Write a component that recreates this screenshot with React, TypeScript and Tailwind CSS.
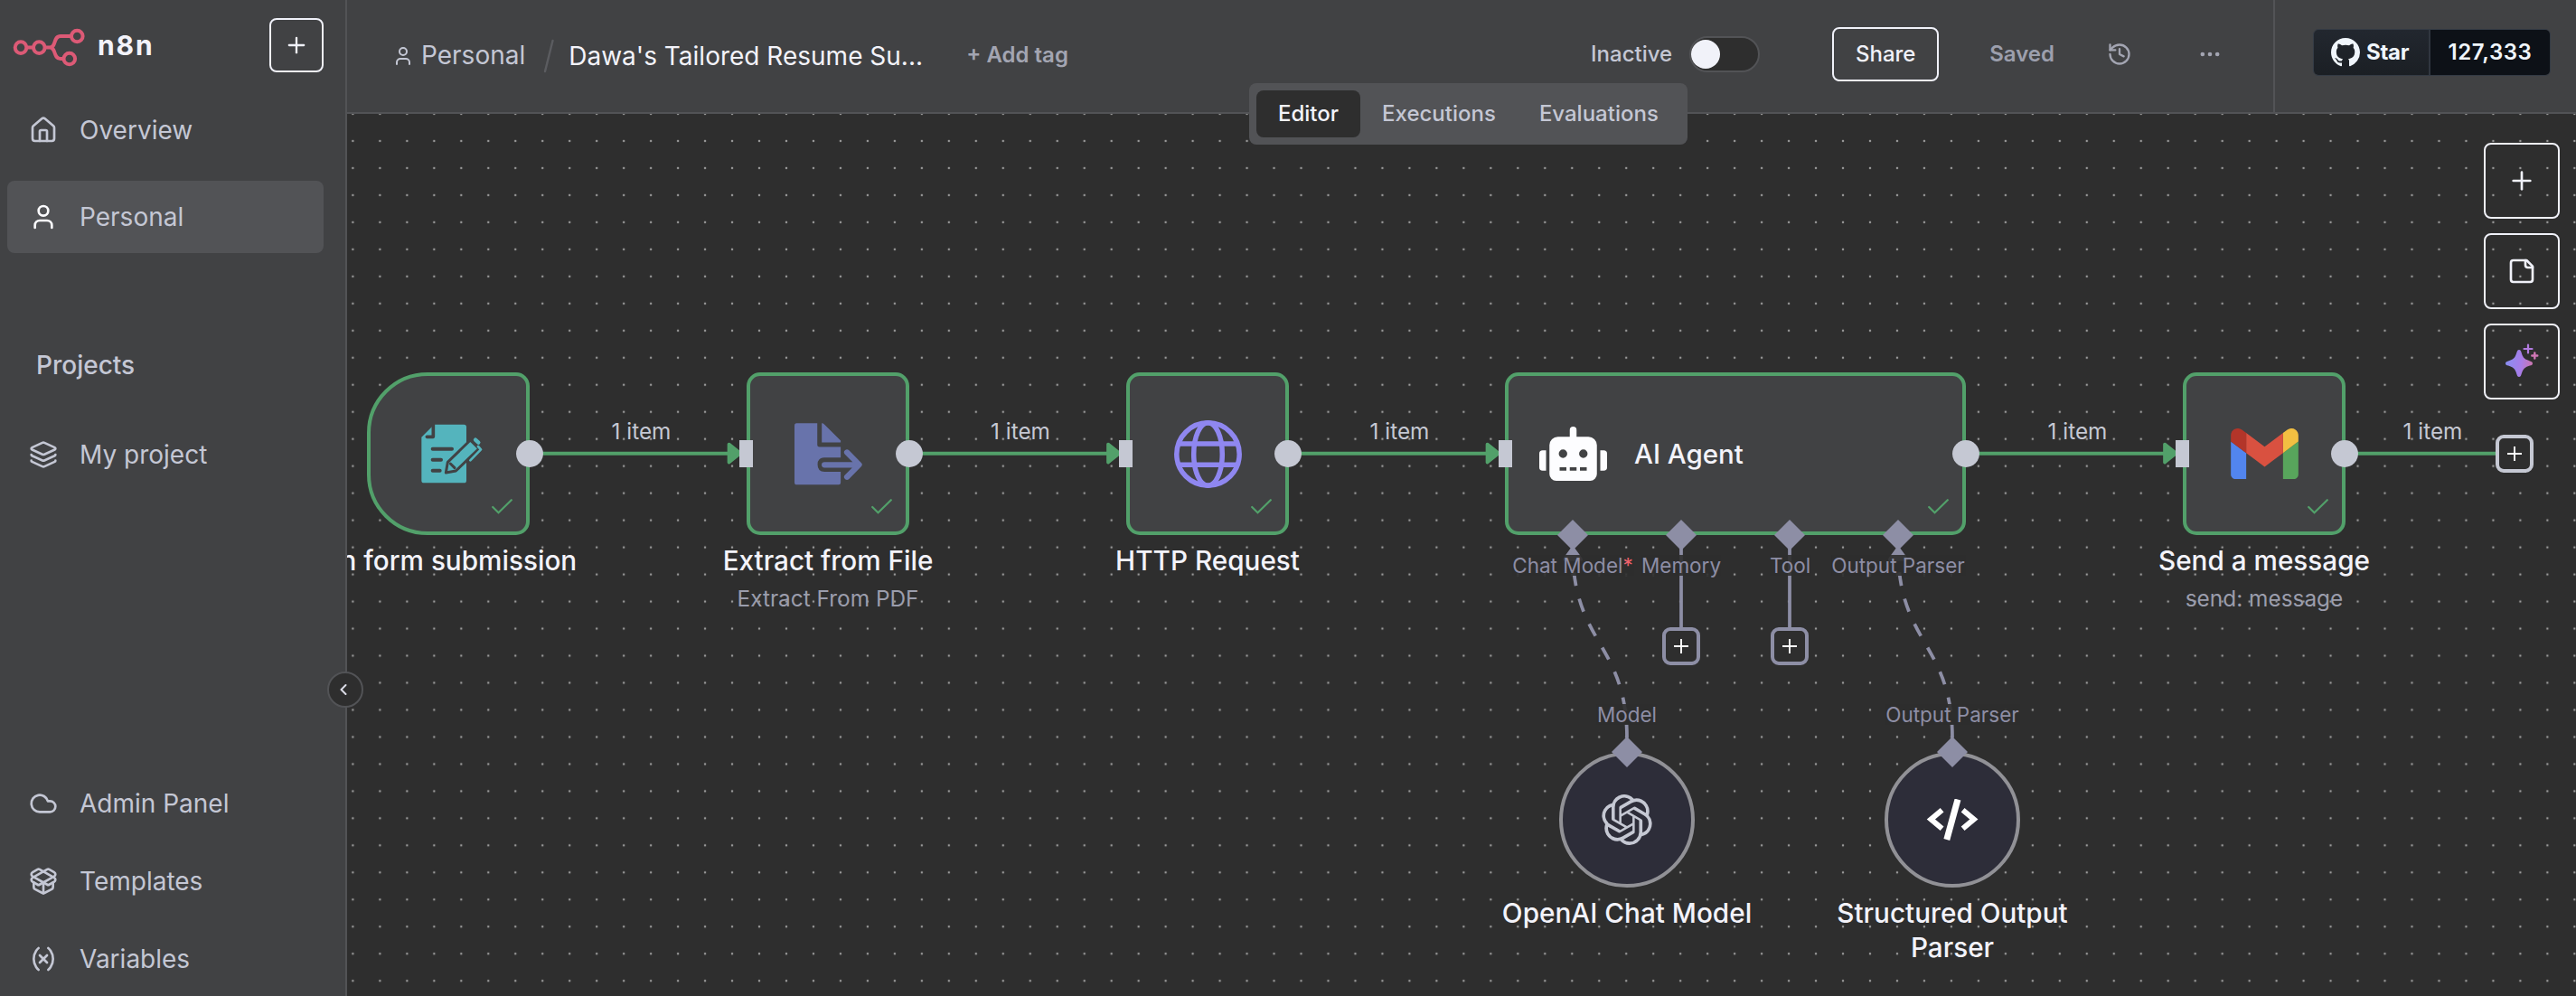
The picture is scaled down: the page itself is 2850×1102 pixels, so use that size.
import React from "react";
import type { ReactNode } from "react";
import {
  ChevronLeft,
  Cloud,
  Ellipsis,
  History,
  House,
  Layers,
  PackageOpen,
  Plus,
  User,
  Variable,
} from "lucide-react";
import { FaRobot } from "react-icons/fa";
import { SiOpenai } from "react-icons/si";

/* ---------- Sidebar ---------- */

function Logo() {
  return (
    <svg className="h-[46px] w-[84px]" viewBox="13 30 84 46" fill="none" stroke="#dc5a76" strokeWidth="4">
      <circle cx="23" cy="52.6" r="6.3" />
      <circle cx="43.3" cy="52.6" r="6.3" />
      <circle cx="85.3" cy="40" r="6.3" />
      <circle cx="76.8" cy="65" r="6.3" />
      <path d="M29 52.6H37M50 52.6H55C62.5 52.6 58.5 40 67 40H79M55 52.6C62.5 52.6 58.5 65 67 65H70.5" />
    </svg>
  );
}

function NavItem({ icon, label, active = false }: { icon: ReactNode; label: string; active?: boolean }) {
  return (
    <a
      className={
        active
          ? "flex h-20 w-[350px] items-center gap-6 rounded-lg bg-[#525356] pl-6 text-[28px] text-[#c4c7d4]"
          : "flex h-20 w-[350px] items-center gap-6 rounded-lg pl-6 text-[28px] text-[#c4c7d4]"
      }
    >
      {icon}
      <span>{label}</span>
    </a>
  );
}

function Sidebar() {
  return (
    <aside className="relative z-20 flex h-full w-[384px] shrink-0 flex-col border-r-2 border-[#525356] bg-[#414244] pl-2">
      <div className="mt-5 flex h-[60px] items-center pr-6">
        <div className="ml-[5px] mt-1.5">
          <Logo />
        </div>
        <span className="ml-[11px] text-[30px] font-bold tracking-[1.9px] text-[#f3f3fa]">n8n</span>
        <button className="ml-auto flex size-[60px] items-center justify-center rounded-lg border-2 border-[#f0f1f9] text-[#f0f1f9]">
          <Plus size={28} />
        </button>
      </div>
      <nav className="mt-6 flex flex-col gap-4">
        <NavItem icon={<House size={32} />} label="Overview" />
        <NavItem active icon={<User size={32} className="text-[#fbfbfe]" />} label="Personal" />
      </nav>
      <h2 className="ml-8 mt-[104px] text-[28px] font-medium leading-10 text-[#c4c7d4]">Projects</h2>
      <nav className="mt-[39px]">
        <NavItem icon={<Layers size={32} />} label="My project" />
      </nav>
      <nav className="mb-px mt-auto flex flex-col gap-1.5">
        <NavItem icon={<Cloud size={32} />} label="Admin Panel" />
        <NavItem icon={<PackageOpen size={32} />} label="Templates" />
        <NavItem icon={<Variable size={32} />} label="Variables" />
      </nav>
      <button className="absolute right-[-20px] top-[743px] flex size-10 items-center justify-center rounded-full border-2 border-[#525356] bg-[#2e2e2e] pr-1 text-[#dcdde8]">
        <ChevronLeft size={20} strokeWidth={2.4} />
      </button>
    </aside>
  );
}

/* ---------- Header ---------- */

function GithubMark() {
  return (
    <svg className="size-8" viewBox="0 0 16 16" fill="currentColor">
      <path d="M8 0C3.58 0 0 3.58 0 8c0 3.54 2.29 6.53 5.47 7.59.4.07.55-.17.55-.38 0-.19-.01-.82-.01-1.49-2.01.37-2.53-.49-2.69-.94-.09-.23-.48-.94-.82-1.13-.28-.15-.68-.52-.01-.53.63-.01 1.08.58 1.23.82.72 1.21 1.87.87 2.33.66.07-.52.28-.87.51-1.07-1.78-.2-3.64-.89-3.64-3.95 0-.87.31-1.59.82-2.15-.08-.2-.36-1.02.08-2.12 0 0 .67-.21 2.2.82.64-.18 1.32-.27 2-.27s1.36.09 2 .27c1.53-1.04 2.2-.82 2.2-.82.44 1.1.16 1.92.08 2.12.51.56.82 1.27.82 2.15 0 3.07-1.87 3.75-3.65 3.95.29.25.54.73.54 1.48 0 1.07-.01 1.93-.01 2.2 0 .21.15.46.55.38A8.01 8.01 0 0 0 16 8c0-4.42-3.58-8-8-8z" />
    </svg>
  );
}

function Header() {
  return (
    <header className="flex h-[126px] shrink-0 border-b-2 border-[#525356] bg-[#414244]">
      <div className="flex h-[122px] items-center text-[#c4c7d4]">
        <User size={24} className="ml-[50px] mt-0.5" />
        <span className="ml-2 text-[28px]">Personal</span>
        <svg className="ml-5 h-10 w-3" viewBox="0 0 12 40">
          <path d="M10.5 4L2 38" stroke="#5b5c60" strokeWidth="2.4" strokeLinecap="round" />
        </svg>
        <span className="ml-4 mt-0.5 w-[394px] whitespace-nowrap text-[28px] text-[#f3f3fa]">
          Dawa's Tailored Resume Su...
        </span>
        <span className="ml-[46px] text-[24px] font-semibold text-[#a3a5b2]">+ Add tag</span>
      </div>
      <div className="ml-auto flex h-[120px] items-center">
        <span className="text-[24px] font-medium text-[#c4c7d4]">Inactive</span>
        <span className="ml-[19px] flex h-10 w-[78px] items-center rounded-full border-2 border-[#525356] bg-[#2e2e2e]">
          <span className="size-8 rounded-full bg-[#f1f2f9]" />
        </span>
        <button className="ml-20 flex h-[60px] w-[118px] items-center justify-center rounded-lg border-2 border-[#f0f1f9] text-[24px] font-medium text-[#f0f1f9]">
          Share
        </button>
        <span className="ml-[56px] text-[24px] font-semibold text-[#9c9fad]">Saved</span>
        <History size={28} className="ml-[58px] text-[#a3a5b2]" />
        <Ellipsis size={28} className="ml-[72px] text-[#a3a5b2]" />
      </div>
      <div className="ml-[56px] flex h-[124px] w-[335px] border-l-2 border-[#525356] pl-[42px] pt-8">
        <div className="flex h-[52px] w-[263px] overflow-hidden rounded-md border border-[#343b45] text-[24px] font-semibold text-[#f0f6fc]">
          <span className="flex w-[127px] items-center bg-gradient-to-b from-[#22272f] to-[#1b1f24] pl-[19px]">
            <GithubMark />
            <span className="ml-[7px] font-bold tracking-[-0.3px]">Star</span>
          </span>
          <span className="flex flex-1 items-center justify-center border-l-2 border-[#30363f] bg-[#0d1117] tracking-[0.6px]">
            127,333
          </span>
        </div>
      </div>
    </header>
  );
}

function Tabs() {
  return (
    <div className="absolute left-[998px] top-[92px] z-10 flex h-[68px] w-[485px] rounded-lg bg-[#525356] p-2 text-[24px] font-medium text-[#c4c7d4]">
      <span className="flex items-center rounded-lg bg-[#2e2e2e] px-6 text-[#f3f3fa]">Editor</span>
      <span className="flex items-center px-6">Executions</span>
      <span className="flex items-center px-6">Evaluations</span>
    </div>
  );
}

/* ---------- Node icons ---------- */

function FormIcon() {
  return (
    <svg className="h-[66px] w-[68px]" viewBox="48 40 204 198" fill="none" strokeLinecap="round" strokeLinejoin="round">
      <path d="M49 84L91 42H190Q198 42 198 50V228Q198 236 190 236H57Q49 236 49 228Z" fill="#54b4bd" />
      <path d="M88 36V83H67" stroke="#414244" strokeWidth="11" />
      <path d="M86 123H150M86 159H114M86 195H110" stroke="#414244" strokeWidth="12" />
      <path d="M130 202L136 167L211 94L240 122L163 196Z" fill="#54b4bd" stroke="#414244" strokeWidth="9" />
      <path d="M145 172L159 186" stroke="#414244" strokeWidth="9" />
      <path d="M228 93L238 102" stroke="#54b4bd" strokeWidth="13" />
      <path d="M237 115L246 125L211 161" stroke="#54b4bd" strokeWidth="8" />
    </svg>
  );
}

function ExtractIcon() {
  return (
    <svg className="h-[69px] w-[75px]" viewBox="1284 38 226 206" fill="#6873ab">
      <path d="M1291 38H1360V110Q1360 117 1367 117H1438V152H1384Q1361 152 1361 176T1384 200H1438V236Q1438 243 1431 243H1292Q1284 243 1284 235V46Q1284 38 1291 38Z" />
      <path d="M1375 38Q1380 38 1384 42L1438 96V102H1375Z" />
      <path d="M1384 176.5H1495M1459 135L1499.5 176L1459 217" fill="none" stroke="#6873ab" strokeWidth="19" strokeLinecap="round" strokeLinejoin="round" />
    </svg>
  );
}

function GlobeIcon() {
  return (
    <svg className="size-[75px]" viewBox="0 0 75 75" fill="none" stroke="#8f87f0" strokeWidth="5.5">
      <circle cx="37.5" cy="37.5" r="34.7" />
      <ellipse cx="37.5" cy="37.5" rx="15.8" ry="34.7" />
      <path d="M5 26H70M5 49.3H70" />
    </svg>
  );
}

function GmailIcon() {
  return (
    <svg className="h-[56px] w-[75px]" viewBox="52 42 88 66">
      <path d="M58 108h14V74L52 59v43c0 3.32 2.69 6 6 6" fill="#5285ee" />
      <path d="M120 108h14c3.32 0 6-2.69 6-6V59l-20 15" fill="#58a55c" />
      <path d="M120 48v26l20-15v-8c0-7.42-8.47-11.65-14.4-7.2" fill="#f2bf42" />
      <path d="M72 74V48l24 18 24-18v26L96 92" fill="#d95140" />
      <path d="M52 51v8l20 15V48l-5.6-4.2c-5.94-4.45-14.4-.22-14.4 7.2" fill="#b33529" />
    </svg>
  );
}

function CodeIcon() {
  return (
    <svg className="h-[46px] w-[58px]" viewBox="0 0 58 46" fill="none" stroke="#ffffff">
      <path d="M17.6 12.3L5.4 22.5L17.6 32.7M40.6 12.3L52.8 22.5L40.6 32.7" strokeWidth="6" />
      <path d="M35 0.5L22.8 45" strokeWidth="7" />
    </svg>
  );
}

function SparkleIcon() {
  return (
    <svg className="size-[42px]" viewBox="0 0 42 42">
      <defs>
        <linearGradient id="spark" gradientUnits="userSpaceOnUse" x1="1" y1="24" x2="39" y2="27">
          <stop offset="0" stopColor="#8590f2" />
          <stop offset="0.5" stopColor="#a87de9" />
          <stop offset="1" stopColor="#dc7290" />
        </linearGradient>
      </defs>
      <g fill="url(#spark)">
        <path d="M18 8c1.5 0 2 1 2.6 3 1.8 6 3.4 7.6 9.4 9.4 2 .6 3 1.1 3 2.6s-1 2-3 2.6c-6 1.8-7.6 3.4-9.4 9.4-.6 2-1.1 3-2.6 3s-2-1-2.6-3c-1.8-6-3.4-7.6-9.4-9.4-2-.6-3-1.1-3-2.6s1-2 3-2.6c6-1.8 7.6-3.4 9.4-9.4.6-2 1.1-3 2.6-3z" />
      </g>
      <path d="M28 2.5V11.5M23.5 7H32.5" stroke="#b27be0" strokeWidth="2.2" strokeLinecap="round" />
      <path d="M35.3 11.5V17.5M32.3 14.5H38.3" stroke="#cf77b4" strokeWidth="2.4" strokeLinecap="round" />
    </svg>
  );
}

function StickyIcon() {
  return (
    <svg className="size-8" viewBox="0 0 24 24" fill="none" stroke="currentColor" strokeWidth="2" strokeLinecap="round" strokeLinejoin="round">
      <path d="M16 3H5a2 2 0 0 0-2 2v14a2 2 0 0 0 2 2h14a2 2 0 0 0 2-2V8Z" />
      <path d="M15 3v4a2 2 0 0 0 2 2h4" />
    </svg>
  );
}

/* ---------- Canvas parts ---------- */

function Check({ className }: { className: string }) {
  return (
    <svg className={"absolute h-[17px] w-[23px] " + className} viewBox="0 0 23 17" fill="none">
      <path d="M1.2 9L7.5 15.3L21.8 1.2" stroke="#52a06a" strokeWidth="2.2" strokeLinecap="round" />
    </svg>
  );
}

function Node({ className, children }: { className: string; children: ReactNode }) {
  return (
    <div className={"absolute top-[412px] flex h-[180px] items-center border-4 border-[#52a06a] bg-[#414244] " + className}>
      {children}
      <Check className="bottom-[19px] right-[15px]" />
    </div>
  );
}

function OutHandle({ className }: { className: string }) {
  return <div className={"absolute top-[487px] size-[30px] rounded-full bg-[#c5c8d3] " + className} />;
}

function InHandle({ className }: { className: string }) {
  return <div className={"absolute top-[487px] h-[30px] w-[15px] bg-[#c5c8d3] " + className} />;
}

function Diamond({ className }: { className: string }) {
  return <div className={"absolute size-6 rotate-45 bg-[#8d8ea5] " + className} />;
}

function PlusBox({ className }: { className: string }) {
  return (
    <div className={"absolute flex size-[42px] items-center justify-center rounded-[9px] border-4 bg-[#2e2e2e] " + className}>
      <svg className="size-4" viewBox="0 0 16 16">
        <path d="M8 0V16M0 8H16" stroke="#ffffff" strokeWidth="1.9" />
      </svg>
    </div>
  );
}

function Title({ className, children }: { className: string; children: ReactNode }) {
  return (
    <div className={"absolute -translate-x-1/2 whitespace-nowrap text-center text-[29.7px] font-medium leading-[37.5px] text-[#f3f3fa] " + className}>
      {children}
    </div>
  );
}

function Sub({ className, children }: { className: string; children: ReactNode }) {
  return (
    <div className={"absolute top-[644px] -translate-x-1/2 whitespace-nowrap text-[24.4px] leading-9 text-[#9b9dac] " + className}>
      {children}
    </div>
  );
}

function EdgeLabel({ className }: { className: string }) {
  return (
    <div className={"absolute top-[461px] -translate-x-1/2 whitespace-nowrap text-[24.3px] leading-8 text-[#c5c8d3] " + className}>
      1 item
    </div>
  );
}

function PortLabel({ className, children }: { className: string; children: ReactNode }) {
  return (
    <div className={"absolute -translate-x-1/2 whitespace-nowrap bg-[#2e2e2e]/90 text-[22.5px] leading-[23px] text-[#8d8ea5] " + className}>
      {children}
    </div>
  );
}

const arrowTips = [819, 1238.5, 1658, 2407.5];

function Edges() {
  return (
    <svg className="absolute left-0 top-0 h-[1102px] w-[2850px]" viewBox="0 0 2850 1102" fill="none">
      <defs>
        <pattern id="dots" x="375.4" y="111" width="29.975" height="29.975" patternUnits="userSpaceOnUse">
          <circle cx="15" cy="15" r="1.25" fill="#9a9a9a" />
        </pattern>
      </defs>
      <rect x="384" y="126" width="2466" height="976" fill="url(#dots)" />
      <path d="M586 501.8H808M1006 501.8H1228M1425 501.8H1647M2174 501.8H2397M2594 501.8H2764" stroke="#52a06a" strokeWidth="4" />
      {arrowTips.map((x) => (
        <path
          key={x}
          d={`M${x - 12.5} 491.5L${x} 501.5L${x - 12.5} 511.5Z`}
          fill="#52a06a"
          stroke="#52a06a"
          strokeWidth="3.7"
          strokeLinejoin="round"
        />
      ))}
      <g stroke="#8d8ea5" strokeWidth="3.75">
        <path d="M1860 600V696M1980 600V696" />
        <path d="M1800 816.5C1800 712 1740 712 1740 607.5" strokeDasharray="15 15" />
        <path d="M2160 816.5C2160 712 2100 712 2100 607.5" strokeDasharray="15 15" />
      </g>
      <g fill="#8d8ea5" stroke="#8d8ea5" strokeWidth="3" strokeLinejoin="round">
        <path d="M1740 606L1749.5 619H1730.5Z" />
        <path d="M2100 606L2109.5 619H2090.5Z" />
      </g>
    </svg>
  );
}

function Canvas() {
  return (
    <main className="relative flex-1 overflow-hidden bg-[#2e2e2e]">
      <div className="absolute left-[-384px] top-[-126px] h-[1102px] w-[2850px]">
        <Edges />

        <EdgeLabel className="left-[709.5px]" />
        <EdgeLabel className="left-[1129px]" />
        <EdgeLabel className="left-[1548.5px]" />
        <EdgeLabel className="left-[2298.5px]" />
        <EdgeLabel className="left-[2691.5px]" />

        <Node className="left-[406px] w-[180px] justify-center rounded-l-[67px] rounded-r-[15px]">
          <div className="mr-[-8px]"><FormIcon /></div>
        </Node>
        <Node className="left-[826px] w-[180px] justify-center rounded-[15px]"><ExtractIcon /></Node>
        <Node className="left-[1246px] w-[180px] justify-center rounded-[15px]"><GlobeIcon /></Node>
        <Node className="left-[1665px] w-[510px] rounded-[15px]">
          <FaRobot className="ml-[34px] h-[60px] w-[75px] text-[#fdfdff]" />
          <span className="ml-[30px] text-[29.5px] font-medium text-[#f3f3fa]">AI Agent</span>
        </Node>
        <Node className="left-[2415px] w-[180px] justify-center rounded-[15px]"><GmailIcon /></Node>

        <OutHandle className="left-[571px]" />
        <OutHandle className="left-[991px]" />
        <OutHandle className="left-[1410px]" />
        <OutHandle className="left-[2160px]" />
        <OutHandle className="left-[2579px]" />
        <InHandle className="left-[818px]" />
        <InHandle className="left-[1238px]" />
        <InHandle className="left-[1658px]" />
        <InHandle className="left-[2407px]" />
        <PlusBox className="left-[2761px] top-[481px] border-[#c5c8d3]" />

        <Title className="left-[496px] top-[602px]">On form submission</Title>
        <Title className="left-[916px] top-[602px]">Extract from File</Title>
        <Title className="left-[1336px] top-[602px]">HTTP Request</Title>
        <Title className="left-[2505px] top-[602px]">Send a message</Title>
        <Sub className="left-[916px]">Extract From PDF</Sub>
        <Sub className="left-[2505px]">send: message</Sub>

        <Diamond className="left-[1728px] top-[580px]" />
        <Diamond className="left-[1848px] top-[580px]" />
        <Diamond className="left-[1968px] top-[580px]" />
        <Diamond className="left-[2088px] top-[580px]" />
        <PortLabel className="left-[1740px] top-[613.5px]">
          Chat Model<span className="text-[#f0626c]">*</span>
        </PortLabel>
        <PortLabel className="left-[1860px] top-[613.5px]">Memory</PortLabel>
        <PortLabel className="left-[1980.5px] top-[613.5px]">Tool</PortLabel>
        <PortLabel className="left-[2100px] top-[613.5px]">Output Parser</PortLabel>
        <PlusBox className="left-[1839px] top-[694px] border-[#8d8ea5]" />
        <PlusBox className="left-[1959px] top-[694px] border-[#8d8ea5]" />

        <PortLabel className="left-[1800px] top-[778.5px]">Model</PortLabel>
        <PortLabel className="left-[2160px] top-[778.5px]">Output Parser</PortLabel>
        <div className="absolute left-[1725px] top-[832px] flex size-[150px] items-center justify-center rounded-full border-4 border-[#919196] bg-[#2d2d39]">
          <SiOpenai className="size-14 text-[#c5c8d3]" />
        </div>
        <div className="absolute left-[2085px] top-[832px] flex size-[150px] items-center justify-center rounded-full border-4 border-[#919196] bg-[#2d2d39]">
          <CodeIcon />
        </div>
        <Diamond className="left-[1788px] top-[820px]" />
        <Diamond className="left-[2148px] top-[820px]" />
        <Title className="left-[1800px] top-[992px]">OpenAI Chat Model</Title>
        <Title className="left-[2160px] top-[992px]">
          Structured Output
          <br />
          Parser
        </Title>
      </div>

      <div className="absolute right-[18px] top-8 flex flex-col gap-4 text-[#f0f1f9]">
        <button className="flex size-[84px] items-center justify-center rounded-lg border-2 border-[#f0f1f9]"><Plus size={32} /></button>
        <button className="flex size-[84px] items-center justify-center rounded-lg border-2 border-[#f0f1f9]"><StickyIcon /></button>
        <button className="flex size-[84px] items-center justify-center rounded-lg border-2 border-[#f0f1f9]"><SparkleIcon /></button>
      </div>
    </main>
  );
}

export default function App() {
  return (
    <div className="flex h-[1102px] w-[2850px] overflow-hidden bg-[#2e2e2e] font-[family-name:Inter,sans-serif] leading-normal">
      <Sidebar />
      <div className="relative flex flex-1 flex-col">
        <Header />
        <Tabs />
        <Canvas />
      </div>
    </div>
  );
}
